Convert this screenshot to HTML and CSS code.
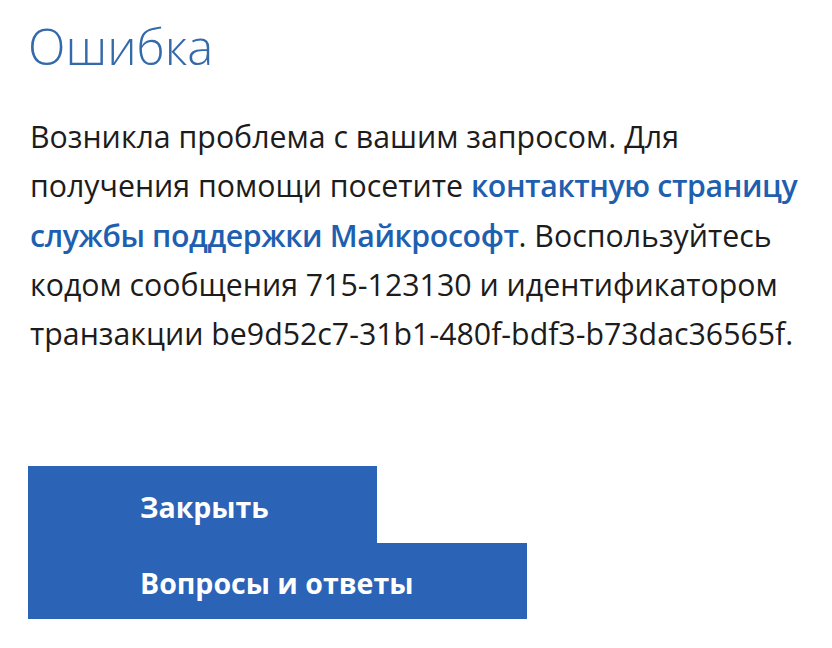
FILE: index.html
```
<!DOCTYPE html>
<html lang="ru">
<head>
<meta charset="utf-8">
<title>Ошибка</title>
<link rel="stylesheet" href="styles.css">
</head>
<body>
<main class="dialog">
  <h1 class="title">Ошибка</h1>
  <p class="message">Возникла проблема с вашим запросом. Для получения помощи посетите <a class="link" href="#"><span>контактную страницу</span> <span>службы поддержки Майкрософт</span></a>. Воспользуйтесь кодом сообщения 715-123130 и идентификатором транзакции be9d52c7-31b1-480f-bdf3-b73dac36565f.</p>
  <div class="actions">
    <button class="btn btn-close">Закрыть</button>
    <button class="btn btn-faq">Вопросы и ответы</button>
  </div>
</main>
</body>
</html>
```
FILE: styles.css
```
html, body {
  margin: 0;
  padding: 0;
  background: #ffffff;
}
body {
  font-family: "Open Sans", "Noto Sans", sans-serif;
  color: #1c1c1c;
}
.dialog {
  padding: 14px 0 0 28px;
  width: 790px;
}
.title {
  margin: 0;
  font-weight: 300;
  font-size: 49px;
  line-height: 64px;
  color: #3469aa;
}
.message {
  margin: 34px 0 0 2px;
  font-size: 30.3px;
  line-height: 49.3px;
  width: 785px;
}
.link {
  color: #1f5fb0;
  font-weight: 600;
  letter-spacing: -0.4px;
  text-decoration: none;
}
.actions {
  margin-top: 108px;
  display: flex;
  flex-direction: column;
  align-items: flex-start;
}
.btn {
  border: 0;
  margin: 0;
  background: #2b63b6;
  color: #ffffff;
  font-family: "Open Sans", "Noto Sans", sans-serif;
  font-weight: 700;
  font-size: 28.5px;
  height: 77px;
  padding: 4px 0 0 112px;
  text-align: left;
  cursor: pointer;
}
.btn-close { width: 349px; }
.btn-faq { width: 499px; height: 76px; }
```
